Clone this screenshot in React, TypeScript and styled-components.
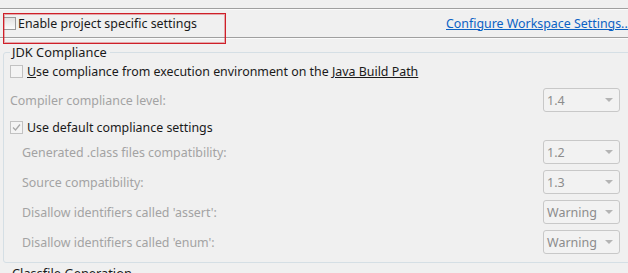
import React from "react";
import styled, { createGlobalStyle } from "styled-components";

const Global = createGlobalStyle`
  html, body { margin: 0; padding: 0; background: #f0f0f0; }
  body { font-family: "Noto Sans", "Open Sans", sans-serif; font-size: 12.4px; color: #1a1a1a; }
`;

const Page = styled.div`
  position: relative;
  width: 628px;
  height: 273px;
  overflow: hidden;
  background: #f0f0f0;
`;

const Rule = styled.div<{ $top?: number }>`
  height: 1px;
  margin-top: ${(p) => p.$top ?? 0}px;
  background: #a0a0a0;
  box-shadow: 0 1px 0 #fbfbfb;
`;

const Header = styled.div`
  display: flex;
  align-items: center;
  height: 28px;
  padding-left: 3px;
  white-space: nowrap;
`;

const HeaderLeft = styled.div`
  display: flex;
  align-items: center;
  gap: 2px;
  width: 443px;
  flex-shrink: 0;
`;

const Link = styled.a`
  color: #0b62c4;
  text-decoration: underline;
  white-space: nowrap;
  cursor: pointer;
`;

const Box = styled.span<{ $disabled?: boolean }>`
  display: inline-flex;
  align-items: center;
  justify-content: center;
  box-sizing: border-box;
  width: 13px;
  height: 13px;
  flex-shrink: 0;
  border: 1px solid ${(p) => (p.$disabled ? "#c2c2c2" : "#9a9a9a")};
  background: ${(p) =>
    p.$disabled ? "#f4f4f4" : "linear-gradient(#e2e2e2, #fbfbfb)"};
`;

const Group = styled.fieldset<{ $gap?: number }>`
  margin: ${(p) => p.$gap ?? 6}px -20px 0 3px;
  padding: 0 27px 5px 6px;
  border: 1px solid #d5dfe5;
  border-radius: 3px;
  min-width: 0;
`;

const Legend = styled.legend`
  margin-left: 0;
  padding: 0 3px 0 2px;
  line-height: 16px;
  font-size: 12.8px;
  color: #1a1a1a;
`;

const Row = styled.div<{ $h: number; $indent?: number }>`
  display: flex;
  align-items: center;
  justify-content: space-between;
  height: ${(p) => p.$h}px;
  padding-left: ${(p) => p.$indent ?? 0}px;
  white-space: nowrap;
`;

const Spacer = styled.div`
  height: 1px;
`;

const CheckLine = styled.label`
  display: flex;
  align-items: center;
  gap: 4px;
`;

const Text = styled.span<{ $muted?: boolean }>`
  color: ${(p) => (p.$muted ? "#a3a3a3" : "#1a1a1a")};
`;

const Under = styled.span`
  text-decoration: underline;
`;

const Combo = styled.div`
  display: flex;
  align-items: center;
  justify-content: space-between;
  box-sizing: border-box;
  width: 77px;
  height: 24px;
  padding: 0 6px 0 3px;
  border: 1px solid #c8c8c8;
  border-radius: 3px;
  background: #f2f2f2;
  color: #8c8c8c;
  font-size: 12.5px;
`;

const Arrow = styled.span`
  width: 0;
  height: 0;
  border-left: 4px solid transparent;
  border-right: 4px solid transparent;
  border-top: 4px solid #b4b4b4;
`;

const Highlight = styled.div`
  position: absolute;
  left: 3px;
  top: 13px;
  width: 223px;
  height: 31px;
  box-sizing: border-box;
  border: 1px solid #cf1f29;
  box-shadow: inset 0 0 0 1px rgba(207, 31, 41, 0.35);
  pointer-events: none;
`;

const Check = () => (
  <svg width="9" height="9" viewBox="0 0 9 9">
    <path d="M1 4.5 L3.5 7 L8 1.5" fill="none" stroke="#a8a8a8" strokeWidth="1.3" />
  </svg>
);

const Select = ({ value }: { value: string }) => (
  <Combo>
    <span>{value}</span>
    <Arrow />
  </Combo>
);

const rows = [
  { label: "Generated .class files compatibility:", value: "1.2" },
  { label: "Source compatibility:", value: "1.3" },
  { label: "Disallow identifiers called 'assert':", value: "Warning" },
  { label: "Disallow identifiers called 'enum':", value: "Warning" },
];

export default function App() {
  return (
    <>
      <Global />
      <Page>
        <Rule $top={8} />
        <Header>
          <HeaderLeft>
            <Box />
            <Text>Enable project specific settings</Text>
          </HeaderLeft>
          <Link>Configure Workspace Settings...</Link>
        </Header>
        <Rule />
        <Group>
          <Legend>JDK Compliance</Legend>
          <Row $h={22}>
            <CheckLine>
              <Box $disabled />
              <Text>
                <Under>U</Under>se compliance from execution environment on the{" "}
                <Under>Java Build Path</Under>
              </Text>
            </CheckLine>
          </Row>
          <Row $h={36}>
            <Text $muted>Compiler compliance level:</Text>
            <Select value="1.4" />
          </Row>
          <Row $h={18}>
            <CheckLine>
              <Box $disabled>
                <Check />
              </Box>
              <Text>Use default compliance settings</Text>
            </CheckLine>
          </Row>
          <Spacer />
          {rows.map((r) => (
            <Row key={r.label} $h={30} $indent={12}>
              <Text $muted>{r.label}</Text>
              <Select value={r.value} />
            </Row>
          ))}
        </Group>
        <Group $gap={2}>
          <Legend>Classfile Generation</Legend>
          <Row $h={20} />
        </Group>
        <Highlight />
      </Page>
    </>
  );
}
